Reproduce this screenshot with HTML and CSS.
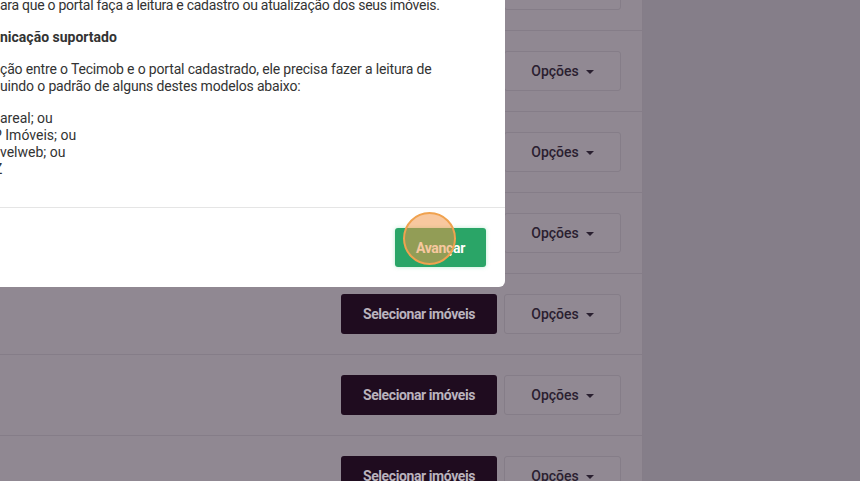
FILE: index.html
```html
<!DOCTYPE html>
<html lang="pt-BR">
<head>
<meta charset="utf-8">
<title>Portais</title>
<link rel="stylesheet" href="styles.css">
</head>
<body>
<div class="page">
  <main class="list">
    <div class="row"><button class="btn-dark">Selecionar imóveis</button><button class="btn-opt">Opções <span class="caret"></span></button></div>
    <div class="row"><button class="btn-dark">Selecionar imóveis</button><button class="btn-opt">Opções <span class="caret"></span></button></div>
    <div class="row"><button class="btn-dark">Selecionar imóveis</button><button class="btn-opt">Opções <span class="caret"></span></button></div>
    <div class="row"><button class="btn-dark">Selecionar imóveis</button><button class="btn-opt">Opções <span class="caret"></span></button></div>
    <div class="row"><button class="btn-dark">Selecionar imóveis</button><button class="btn-opt">Opções <span class="caret"></span></button></div>
    <div class="row"><button class="btn-dark">Selecionar imóveis</button><button class="btn-opt">Opções <span class="caret"></span></button></div>
    <div class="row"><button class="btn-dark">Selecionar imóveis</button><button class="btn-opt">Opções <span class="caret"></span></button></div>
  </main>
  <aside class="side"></aside>
</div>

<div class="modal">
  <div class="modal-body">
    <p class="txt l1">ara que o portal faça a leitura e cadastro ou atualização dos seus imóveis.</p>
    <p class="txt heading">nicação suportado</p>
    <p class="txt para">ção entre o Tecimob e o portal cadastrado, ele precisa fazer a leitura de<br>uindo o padrão de alguns destes modelos abaixo:</p>
    <ul class="models">
      <li>areal; ou</li>
      <li class="cut-p">P Imóveis; ou</li>
      <li>velweb; ou</li>
      <li class="cut-z">Z</li>
    </ul>
  </div>
  <div class="modal-footer">
    <button class="btn-green">Avançar</button>
  </div>
</div>

<div class="cursor"></div>
</body>
</html>
```

FILE: styles.css
```css
* { box-sizing: border-box; }
html, body {
  margin: 0;
  padding: 0;
  width: 860px;
  height: 481px;
  overflow: hidden;
  background: #908892;
  font-family: Roboto, "Liberation Sans", Arial, sans-serif;
}
.page {
  display: flex;
  height: 481px;
}
.list {
  width: 643px;
  margin-top: -50px;
  border-right: 1px solid #857d88;
  display: flex;
  flex-direction: column;
  flex-shrink: 0;
}
.row {
  height: 81px;
  flex-shrink: 0;
  border-bottom: 1px solid #857d88;
  display: flex;
  align-items: center;
  justify-content: flex-end;
  gap: 7px;
  padding-right: 21px;
}
.btn-dark {
  width: 156px;
  height: 40px;
  border: 0;
  border-radius: 3px;
  background: #1f0c1f;
  color: #bab3bd;
  font-family: Roboto, sans-serif;
  font-weight: 700;
  font-size: 14px;
  letter-spacing: -0.4px;
}
.btn-opt {
  width: 117px;
  height: 40px;
  border: 1px solid #857d88;
  border-radius: 3px;
  background: #918993;
  color: #2a2030;
  font-family: Roboto, sans-serif;
  font-size: 14px;
  font-weight: 500;
  display: flex;
  align-items: center;
  justify-content: center;
  gap: 7px;
}
.caret {
  width: 0;
  height: 0;
  border-left: 4px solid transparent;
  border-right: 4px solid transparent;
  border-top: 4px solid #2a2030;
  margin-top: 2px;
}
.side {
  flex: 1;
  background: #857e89;
}
.modal {
  position: absolute;
  top: -19px;
  left: -20px;
  width: 525px;
  background: #fff;
  border-radius: 6px;
  color: #333;
  font-size: 14px;
  line-height: 17px;
  overflow: hidden;
}
.modal-body {
  padding: 16px 20px 29px 20px;
}
.txt {
  margin: 0 0 15px 0;
  white-space: nowrap;
}
.l1 { letter-spacing: -0.28px; }
.para { letter-spacing: -0.16px; }
.heading {
  font-weight: 700;
}
.models {
  list-style: none;
  margin: 14px 0 0 0;
  padding: 0;
  white-space: nowrap;
}
.cut-p { text-indent: -7px; }
.cut-z { text-indent: -6px; }
.modal-footer {
  border-top: 1px solid #e5e5e5;
  padding: 20px 19px 20px 20px;
  display: flex;
  justify-content: flex-end;
}
.btn-green {
  width: 91px;
  height: 39px;
  border: 0;
  border-radius: 3px;
  background: #2aa567;
  color: #fff;
  font-family: Roboto, sans-serif;
  font-weight: 700;
  font-size: 14px;
  letter-spacing: -0.3px;
  box-shadow: 0 0 4px rgba(60, 200, 120, 0.35);
}
.cursor {
  position: absolute;
  left: 403px;
  top: 212px;
  width: 53px;
  height: 53px;
  border-radius: 50%;
  border: 2px solid #f0a24f;
  background: rgba(242, 150, 70, 0.52);
}
```
